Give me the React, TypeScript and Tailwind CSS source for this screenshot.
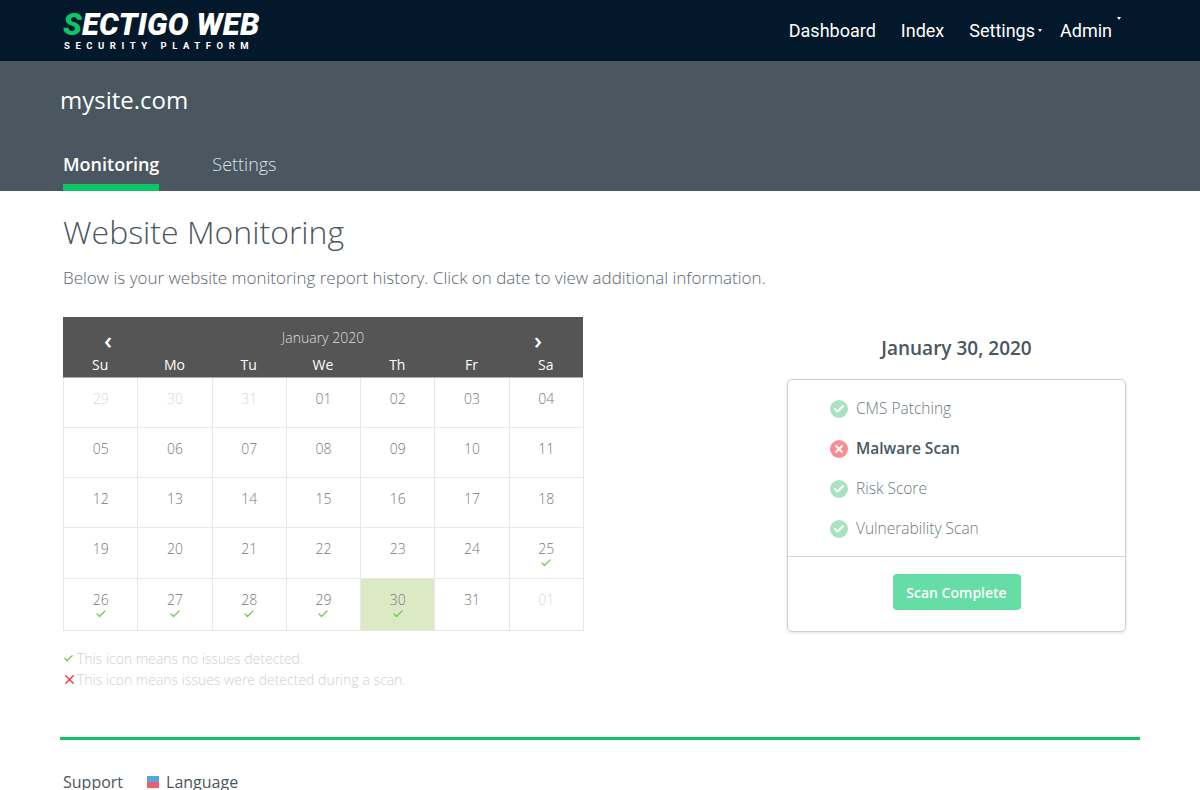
import { Check, X } from "lucide-react";

type Day = { label: string; muted?: boolean; ok?: boolean; active?: boolean };

const weekDays = ["Su", "Mo", "Tu", "We", "Th", "Fr", "Sa"];

const weeks: Day[][] = [
  [
    { label: "29", muted: true },
    { label: "30", muted: true },
    { label: "31", muted: true },
    { label: "01" },
    { label: "02" },
    { label: "03" },
    { label: "04" },
  ],
  ["05", "06", "07", "08", "09", "10", "11"].map((label) => ({ label })),
  ["12", "13", "14", "15", "16", "17", "18"].map((label) => ({ label })),
  [
    { label: "19" },
    { label: "20" },
    { label: "21" },
    { label: "22" },
    { label: "23" },
    { label: "24" },
    { label: "25", ok: true },
  ],
  [
    { label: "26", ok: true },
    { label: "27", ok: true },
    { label: "28", ok: true },
    { label: "29", ok: true },
    { label: "30", ok: true, active: true },
    { label: "31" },
    { label: "01", muted: true },
  ],
];

const rowHeights = ["h-[50px]", "h-[50px]", "h-[50px]", "h-[51px]", "h-[52px]"];

const checks = [
  { label: "CMS Patching" },
  { label: "Malware Scan", failed: true },
  { label: "Risk Score" },
  { label: "Vulnerability Scan" },
];

function StatusIcon({ failed }: { failed?: boolean }) {
  return (
    <span
      className={`flex h-[18px] w-[18px] shrink-0 items-center justify-center rounded-full ${
        failed ? "bg-[#fb8b94]" : "bg-[#a9e2bd]"
      }`}
    >
      {failed ? (
        <X size={12} strokeWidth={4} className="text-white" />
      ) : (
        <Check size={12} strokeWidth={4} className="text-white" />
      )}
    </span>
  );
}

function Caret() {
  return <span className="ml-[3px] h-0 w-0 border-x-[2px] border-t-[3px] border-x-transparent border-t-white" />;
}

export default function App() {
  return (
    <div className="h-[790px] overflow-hidden bg-white font-['Open_Sans',sans-serif] font-light text-[#4a5660]">
      <header className="flex h-[61px] items-center justify-between bg-[#04182b] pl-[63px] pr-[79px]">
        <div className="flex flex-col pt-[1px] text-white">
          <div className="flex h-[30px] items-center font-['Roboto',sans-serif] text-[31px] font-black italic leading-[30px] tracking-[0.2px]">
            <span className="text-[#0cc568]">S</span>
            <span>ECTIGO WEB</span>
          </div>
          <div className="pl-[1px] font-['Roboto',sans-serif] text-[9.5px] font-bold leading-[12px] tracking-[5.55px]">
            SECURITY PLATFORM
          </div>
        </div>
        <nav className="flex items-center font-['Roboto',sans-serif] text-[18px] font-normal text-white">
          <span>Dashboard</span>
          <span className="ml-[25px]">Index</span>
          <span className="ml-[25px]">Settings</span>
          <Caret />
          <span className="ml-[18px]">Admin</span>
          <span className="ml-[2px]">
            <Caret />
          </span>
        </nav>
      </header>

      <section className="flex h-[130px] flex-col justify-between bg-[#4a5660] pl-[60px] text-white">
        <h2 className="pt-[21px] text-[24px] font-normal leading-[36px]">mysite.com</h2>
        <div className="flex pl-[3px] text-[18px] leading-[24px]">
          <span className="h-[39px] border-b-[7px] border-[#0cc568] font-semibold">Monitoring</span>
          <span className="ml-[53px] text-[#dfe3e6]">Settings</span>
        </div>
      </section>

      <main className="pl-[63px] pr-[74px]">
        <h1 className="pt-[19px] text-[32px] font-light leading-[44px]">Website Monitoring</h1>
        <p className="mt-[12px] text-[17px] leading-[24px] text-[#5b6670]">
          Below is your website monitoring report history. Click on date to view additional information.
        </p>

        <div className="mt-[27px] flex items-start justify-between">
          <div className="w-[521px]">
            <div className="h-[61px] w-[520px] border-b border-[#aaa] bg-[#555555] text-white">
              <div className="flex h-[38px] items-end justify-between px-[41px] pt-[10px]">
                <span className="text-[24px] font-semibold leading-[30px]">‹</span>
                <span className="mb-[7px] text-[14px] leading-[20px] text-[#ddd]">January 2020</span>
                <span className="text-[24px] font-semibold leading-[30px]">›</span>
              </div>
              <div className="grid grid-cols-7 text-center text-[14px] font-normal leading-[20px]">
                {weekDays.map((d) => (
                  <span key={d}>{d}</span>
                ))}
              </div>
            </div>
            <div className="border-l border-[#e8e8e8]">
              {weeks.map((week, i) => (
                <div key={i} className={`grid grid-cols-7 border-b border-[#e8e8e8] ${rowHeights[i]}`}>
                  {week.map((day, j) => (
                    <div
                      key={j}
                      className={`flex flex-col items-center border-r border-[#e8e8e8] pt-[11px] text-[14px] leading-[20px] ${
                        day.muted ? "text-[#d8d8d8]" : "text-[#777]"
                      } ${day.active ? "bg-[#dbeac4]" : ""}`}
                    >
                      <span>{day.label}</span>
                      {day.ok && <Check size={12} strokeWidth={2.5} className="-mt-[2px] text-[#76c94f]" />}
                    </div>
                  ))}
                </div>
              ))}
            </div>
            <div className="mt-[17px] text-[14px] leading-[21px] text-[#cfcfcf]">
              <div className="flex items-center">
                <Check size={11} strokeWidth={3} className="mr-[3px] text-[#76c94f]" />
                This icon means no issues detected.
              </div>
              <div className="flex items-center">
                <X size={15} strokeWidth={2} className="-ml-[1px] text-[#f4333d]" />
                This icon means issues were detected during a scan.
              </div>
            </div>
          </div>

          <div className="mt-[17px] w-[339px]">
            <h3 className="text-center text-[19px] font-semibold leading-[28px]">January 30, 2020</h3>
            <div className="mt-[17px] h-[253px] rounded-[5px] border border-[#cfcfcf] shadow-[0_1px_3px_rgba(0,0,0,0.12)]">
              <div className="h-[177px] border-b border-[#d5d5d5] pl-[42px] pt-[9px]">
                {checks.map((c) => (
                  <div key={c.label} className="flex h-[40px] items-center gap-[8px]">
                    <StatusIcon failed={c.failed} />
                    <span
                      className={`text-[15.5px] ${c.failed ? "font-semibold text-[#4a5660]" : "text-[#6d7780]"}`}
                    >
                      {c.label}
                    </span>
                  </div>
                ))}
              </div>
              <div className="flex justify-center pt-[17px]">
                <button className="h-[36px] w-[128px] rounded-[4px] bg-[#66dda6] text-[14px] font-semibold text-white">
                  Scan Complete
                </button>
              </div>
            </div>
          </div>
        </div>
      </main>

      <footer className="mx-[60px] mt-[47px] border-t-[3px] border-[#0cc568] pl-[3px] pt-[30px] text-[16px] font-normal text-[#4a5660]">
        <div className="flex items-center">
          <span>Support</span>
          <span className="ml-[24px] mr-[7px] h-[12px] w-[12px] bg-[linear-gradient(#5aa5e0_50%,#e8606c_50%)]" />
          <span>Language</span>
        </div>
      </footer>
    </div>
  );
}
